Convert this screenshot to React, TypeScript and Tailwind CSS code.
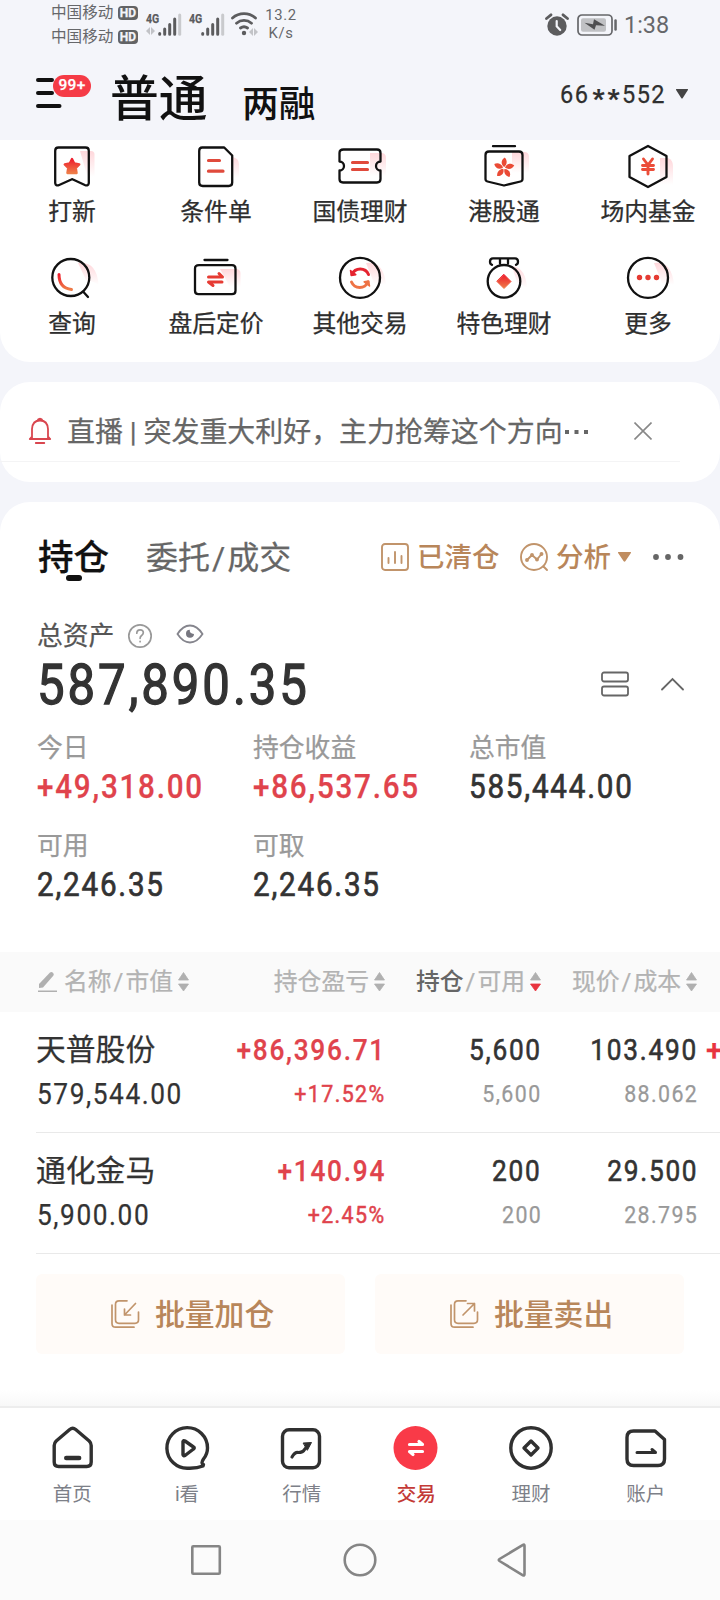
import type { ReactNode } from "react";

function Defs() {
  return (
    <svg width="0" height="0" className="absolute">
      <defs>
        <linearGradient id="hot" x1="0" y1="0" x2="0" y2="1">
          <stop offset="0" stopColor="#ee1c2c" />
          <stop offset="1" stopColor="#ee7d48" />
        </linearGradient>
        <linearGradient id="glow" x1="0" y1="0" x2="0" y2="1">
          <stop offset="0" stopColor="#ff5a6a" stopOpacity="0.24" />
          <stop offset="1" stopColor="#ff5a6a" stopOpacity="0" />
        </linearGradient>
      </defs>
    </svg>
  );
}

/* Narrow, loosely tracked figures */
function Num({ children, right }: { children: ReactNode; right?: boolean }) {
  return (
    <span className={right ? "-mr-[0.035em] inline-block origin-right scale-x-[0.89] tracking-[0.066em]" : "inline-block origin-left scale-x-[0.89] tracking-[0.06em]"}>
      {children}
    </span>
  );
}

function Tile({ label, children }: { label: string; children: ReactNode }) {
  return (
    <div className="flex h-28 w-36 flex-col items-center">
      <svg width="56" height="48" viewBox="0 0 56 48" fill="none" stroke="#111" strokeWidth="2.3" strokeLinejoin="round" strokeLinecap="round">
        {children}
      </svg>
      <span className="mt-[3px] h-9 text-[23.8px] leading-9 whitespace-nowrap text-[#2e2e2e]">{label}</span>
    </div>
  );
}

function Signal() {
  return (
    <div className="flex h-[26px] w-[43px]">
      <div className="flex w-3 flex-col">
        <span className="h-[15px] w-3 origin-left scale-x-[0.78] text-[13.5px] leading-[15px] font-bold text-[#5c5c5e]">4G</span>
      </div>
      <svg width="25" height="26" viewBox="0 0 25 26" strokeWidth="3" strokeLinecap="round" stroke="#5c5c5e">
        <path d="M1.7 22.5v.7M6.7 18v5.2M11.7 13.5v9.7M16.7 8v15.2" />
        <path d="M21.7 4v19.2" stroke="#c9cacd" />
      </svg>
    </div>
  );
}

function StatusBar() {
  return (
    <div className="flex h-[50px] items-start pl-[51px] text-[#66676a]">
      <div className="flex w-[95px] flex-col pt-[1px]">
        {[0, 1].map((i) => (
          <div key={i} className="flex h-6 items-center">
            <span className="w-[67px] text-[15.6px] leading-6 whitespace-nowrap [-webkit-text-stroke:0]">中国移动</span>
            <span className="flex h-[14px] w-[20px] items-center justify-center rounded-[4px] bg-[#626365] text-[12px] leading-none font-bold text-[#f4f5fa]">HD</span>
          </div>
        ))}
      </div>
      <div className="relative flex pt-[11px]">
        <Signal />
        <Signal />
        <svg width="9" height="8" viewBox="0 0 9 8" className="absolute top-[27px] left-0" fill="#c2c3c7">
          <path d="M0 4 4 0v8zM5 0l4 4-4 4z" />
        </svg>
        <svg width="28" height="26" viewBox="0 0 28 26" fill="none" stroke="#5c5c5e" strokeWidth="2.8" strokeLinecap="round" className="-ml-[1px]">
          <path d="M1.500 7a17.500 17.500 0 0 1 23 0M5.500 12.200a11.500 11.500 0 0 1 15 0M9.500 17a6 6 0 0 1 7 0" />
          <circle cx="13" cy="22" r="2.2" fill="#5c5c5e" stroke="none" />
          <path d="m18 21 4-4v8zM23 17l4 4-4 4z" fill="#c2c3c7" stroke="none" />
        </svg>
      </div>
      <div className="ml-[5px] flex w-[34px] flex-col items-center pt-[6px] text-[14.8px] leading-[18px] tracking-[0.7px] [-webkit-text-stroke:0]">
        <span>13.2</span>
        <span>K/s</span>
      </div>
      <div className="ml-[247px] flex h-[50px] items-center">
        <svg width="24" height="24" viewBox="0 0 24 24">
          <path d="M1.5 5.5 6 1.8M22.5 5.5 18 1.8" stroke="#5c5c5e" strokeWidth="2.8" strokeLinecap="round" />
          <circle cx="12" cy="13" r="9.7" fill="#5c5c5e" />
          <path d="M11.7 8v5.3l3.5 3.7" stroke="#f4f5fa" strokeWidth="2.2" fill="none" strokeLinecap="round" />
        </svg>
        <svg width="41" height="24" viewBox="0 0 41 24" className="ml-2">
          <rect x="1" y="2" width="34" height="20" rx="4" fill="none" stroke="#66676a" strokeWidth="1.7" />
          <rect x="4" y="5.2" width="25" height="13.500" rx="2" fill="#c0c1c4" />
          <path d="M7.500 9.700 16 11.200l1-5 11 6.500-9-.5-1.500 4.500z" fill="#4e4e50" />
          <rect x="37.300" y="6.200" width="2.500" height="11.500" rx="1.200" fill="#66676a" />
        </svg>
        <span className="ml-[6px] text-[23.4px] leading-8 [-webkit-text-stroke:0]">1:38</span>
      </div>
    </div>
  );
}

function TitleBar() {
  return (
    <div className="flex h-[90px] items-start pl-9">
      <div className="relative h-[60px] w-[74px]">
        <svg width="28" height="34" viewBox="0 0 28 34" className="mt-[26px]" stroke="#111" strokeWidth="4" strokeLinecap="round">
          <path d="M2 4h14M2 17h14M2 30h21.500" />
        </svg>
        <span className="absolute top-[25px] left-[17px] flex h-[22px] w-[38px] items-center justify-center rounded-full bg-[#f53b46] text-[15.5px] leading-none font-medium tracking-[0.3px] text-white">99+</span>
      </div>
      <span className="mt-[20px] h-[60px] w-[132px] text-[48.8px] leading-[60px] font-medium text-[#111] [-webkit-text-stroke:0]">普通</span>
      <span className="mt-[28px] h-[54px] text-[36.8px] leading-[54px] font-medium text-[#111] [-webkit-text-stroke:0]">两融</span>
      <div className="mt-[28px] ml-auto flex h-8 items-center pr-8 text-[26.5px] leading-8 text-[#2f2f2f]">
        <span className="w-[31px]"><Num>66</Num></span>
        <span className="relative top-1 w-[15px] text-center font-bold">*</span>
        <span className="relative top-1 w-[15px] text-center font-bold">*</span>
        <span className="w-[43px] pl-[1px]"><Num>552</Num></span>
        <svg width="12" height="10" viewBox="0 0 12 10" className="ml-[12px]" fill="#444">
          <path d="M.6 0h10.800a.6.6 0 0 1 .5 1L6.800 9a1 1 0 0 1-1.600 0L.1 1A.6.6 0 0 1 .6 0z" />
        </svg>
      </div>
    </div>
  );
}

const petal = "M0-1C-4-3-4.500-7.500-1-10.500 1.500-8.500 3-5 0-1z";

function Shortcuts() {
  return (
    <section className="grid h-[222px] grid-cols-5 overflow-hidden rounded-b-[30px] bg-white pt-[3px]">
      <Tile label="打新">
        <path d="M36 8h11q3.500 0 3.500 3.500V34h-7z" fill="url(#glow)" stroke="none" />
        <path d="M14.500 4.500h27q3.300 0 3.300 3.300v32.200q-.5 3.500-4 2L29 36.500q-.8-.5-1.600 0L15.200 42q-3.500 1.500-4-2V7.800q0-3.300 3.300-3.300z" />
        <path d="m28 16 2.300 4.500 5 1-3.500 3.500.8 5h-9.200l.8-5-3.500-3.500 5-1z" fill="url(#hot)" stroke="url(#hot)" />
      </Tile>
      <Tile label="条件单">
        <path d="m43 13 6 3q2 2 2 5v14h-8z" fill="url(#glow)" stroke="none" />
        <path d="M14.200 4.500h22l8 8v27q0 3.500-3.500 3.500h-26q-3.500 0-3.500-3.500V8q0-3.500 3-3.500z" />
        <path d="M20.500 17.500h11M20.500 28.200H35" stroke="#e04a3c" strokeWidth="3.200" />
      </Tile>
      <Tile label="国债理财">
        <path d="M38 10h11q5 0 5 5v18H38z" fill="url(#glow)" stroke="none" />
        <path d="M11.500 6.500h33.500q3.500 0 3.500 3.500v8.500a4.500 4.500 0 0 0 0 9V36q0 3.500-3.500 3.500H11q-3.500 0-3.500-3.500v-8.500a4.500 4.500 0 0 0 0-9V10q0-3.500 4-3.500z" />
        <path d="M20.500 19.500h15M20.500 26.500h15" stroke="#e04a3c" strokeWidth="3.200" />
      </Tile>
      <Tile label="港股通">
        <path d="M36 9h12q5 0 5 5v16H36z" fill="url(#glow)" stroke="none" />
        <path d="M17 3.200h22M13 8.500h30q3.500 0 3.500 3.500v24q0 2-2 2.500L28 42.500 11.500 38.500q-2-.5-2-2.500V12q0-3.500 3.500-3.500z" />
        <g transform="translate(28 25)" fill="#ea4a35" stroke="none">
          {[10, 82, 154, 226, 298].map((a) => (
            <path key={a} d={petal} transform={`rotate(${a})`} />
          ))}
        </g>
      </Tile>
      <Tile label="场内基金">
        <path d="M40 15h8q5 2 5 8v19H40z" fill="url(#glow)" stroke="none" />
        <path d="m28 3 18.500 10v21L28 44 9.500 34V13z" />
        <path d="m23.500 16 4.500 6 4.500-6M28 22v9M22.500 22.500h11M22.500 26.500h11" stroke="#eb4d39" strokeWidth="2.900" />
      </Tile>
      <Tile label="查询">
        <path d="M34 8q19-2 20.500 22-4-4-12-4z" fill="url(#glow)" stroke="none" />
        <circle cx="26.800" cy="22.500" r="18.500" />
        <path d="m39.500 37 4.500 5" />
        <path d="M15 19.500q0 13.500 12.500 15" stroke="url(#hot)" strokeWidth="3" />
      </Tile>
      <Tile label="盘后定价">
        <path d="M32 14h16q4.500 0 4.500 4.500V32H42z" fill="url(#glow)" stroke="none" />
        <path d="M16.500 5h23M11 10.200h33q3.500 0 3.500 3.500v22q0 3.500-3.500 3.500H10.500q-3.500 0-3.500-3.500v-22q0-3.500 4-3.500z" />
        <path d="M20.500 22h14l-3.500-3.500M34 27H20.500l4.500 3.500" stroke="#e63b33" strokeWidth="3" />
      </Tile>
      <Tile label="其他交易">
        <path d="M34 8q18-2 20 22l-12-2z" fill="url(#glow)" stroke="none" />
        <circle cx="28" cy="22.800" r="20" />
        <path d="M20 19.500a9 9 0 0 1 16.500 0" stroke="#e52430" strokeWidth="3" />
        <path d="M19.500 27a9 9 0 0 0 16.500 0" stroke="#ee7345" strokeWidth="3" />
        <path d="m18.500 15.500.8 5 4.500-.8z" fill="#e52430" stroke="#e52430" strokeWidth="1.500" />
        <path d="m37.500 31-.8-5-4.500.8z" fill="#ee7345" stroke="#ee7345" strokeWidth="1.500" />
      </Tile>
      <Tile label="特色理财">
        <path d="M36 11q14 2 15 22l-10-6z" fill="url(#glow)" stroke="none" />
        <path d="M16 9.800q-2-.5-2-3 0-3.500 3-3.500h22q3 0 3 3.500 0 2.500-2 3M24 3.500v5M32 3.500v5" />
        <circle cx="28" cy="26.300" r="16.300" />
        <path d="m28 19.500 7 7-7 7-7-7z" fill="url(#hot)" stroke="url(#hot)" strokeWidth="1" />
      </Tile>
      <Tile label="更多">
        <path d="M34 8q18-2 20 22l-12-2z" fill="url(#glow)" stroke="none" />
        <circle cx="28" cy="22.800" r="20" />
        <g fill="#e53b33" stroke="none">
          <circle cx="19.500" cy="22.500" r="2.700" />
          <circle cx="28" cy="22.500" r="2.700" />
          <circle cx="36.500" cy="22.500" r="2.700" />
        </g>
      </Tile>
    </section>
  );
}

function Notice() {
  return (
    <section className="mt-5 h-[100px] rounded-[30px] bg-white pt-5">
      <div className="flex h-[60px] w-[680px] items-center border-b border-[#f4f4f5] pl-7">
        <svg width="24" height="28" viewBox="0 0 24 28" className="mb-px" fill="none" stroke="#d9464f" strokeWidth="1.800" strokeLinecap="round" strokeLinejoin="round">
          <path d="M9.500 3.500a2.600 2.600 0 0 1 5 0M4 21V12q.5-8.500 8-8.500t8 8.500v9M1.800 22l2.200-2.500M22.200 22 20 19.500M1.800 22h20.400M7.800 26h8.500" />
        </svg>
        <span className="mt-[2px] ml-[15px] text-[27.950px] leading-9 whitespace-nowrap text-[#666]">直播 | 突发重大利好，主力抢筹这个方向</span>
        <svg width="24" height="6" viewBox="0 0 24 6" className="ml-[2px]" fill="#666">
          <path d="M0 1h4v4H0zM9.500 1h4v4h-4zM19 1h4v4h-4z" />
        </svg>
        <svg width="18" height="18" viewBox="0 0 18 18" className="mr-7 mb-px ml-auto" stroke="#888" strokeWidth="1.600">
          <path d="m.5.5 17 17M17.500.5l-17 17" />
        </svg>
      </div>
    </section>
  );
}

function Tabs() {
  return (
    <div className="flex h-[110px] items-center pl-[38px]">
      <div className="relative h-[50px] w-[108px] shrink-0 text-[35.5px] leading-[52px] font-medium text-[#111]">
        持仓
        <span className="absolute top-[43px] left-7 h-[6px] w-4 rounded-full bg-[#111]" />
      </div>
      <span className="mt-[2px] w-[234px] shrink-0 text-[32px] leading-[50px] text-[#666]">
        委托<span className="px-[2px]">/</span>成交
      </span>
      <svg width="30" height="30" viewBox="0 0 30 30" className="shrink-0" fill="none" stroke="#c1946b" strokeWidth="1.900" strokeLinecap="round">
        <rect x="2" y="2" width="26" height="26" rx="3" />
        <path d="M8.500 16v5M15 10v11M21.500 14v7" />
      </svg>
      <span className="mt-[2px] ml-[7px] w-[82px] shrink-0 text-[27.500px] leading-[50px] font-medium whitespace-nowrap text-[#b8865a] [-webkit-text-stroke:0]">已清仓</span>
      <svg width="30" height="30" viewBox="0 0 30 30" className="ml-[20px] shrink-0" fill="none" stroke="#c1946b" strokeWidth="1.900" strokeLinecap="round" strokeLinejoin="round">
        <circle cx="15" cy="15" r="13" />
        <path d="m24.500 24.500 3.500 3.500" />
        <path d="m8 18 5-5 5 4.500 4.500-5.500" />
        <circle cx="8" cy="18" r="1" /><circle cx="13" cy="13" r="1" /><circle cx="18" cy="17.500" r="1" /><circle cx="22.500" cy="12" r="1" />
      </svg>
      <span className="mt-[2px] ml-[7px] w-[55px] shrink-0 text-[27.500px] leading-[50px] font-medium whitespace-nowrap text-[#b8865a] [-webkit-text-stroke:0]">分析</span>
      <svg width="13" height="10" viewBox="0 0 13 10" className="ml-[7px] shrink-0" fill="#c08d60">
        <path d="M.6 0h11.800a.6.6 0 0 1 .5 1L7.500 9a1.200 1.200 0 0 1-2 0L.1 1A.6.6 0 0 1 .6 0z" />
      </svg>
      <svg width="32" height="6" viewBox="0 0 32 6" className="ml-[22px] shrink-0" fill="#666">
        <circle cx="3" cy="3" r="2.900" /><circle cx="15" cy="3" r="2.900" /><circle cx="27.500" cy="3" r="2.900" />
      </svg>
    </div>
  );
}

function Stat({ label, value, red }: { label: string; value: string; red?: boolean }) {
  return (
    <div className="h-[98px] w-[216px] pl-px whitespace-nowrap">
      <div className="h-[39px] text-[25.800px] leading-[40px] text-[#999]">{label}</div>
      <div className={`h-[38px] text-[33.300px] leading-[40px] ${red ? "font-medium text-[#e0434c]" : "text-[#333] [-webkit-text-stroke:0.7px]"}`}>
        <Num>{value}</Num>
      </div>
    </div>
  );
}

function Assets() {
  return (
    <div className="h-[340px] pl-9">
      <div className="flex h-12 items-center">
        <span className="w-[91px] pl-px text-[25.800px] leading-[40px] text-[#555]">总资产</span>
        <svg width="26" height="26" viewBox="0 0 26 26" fill="none" stroke="#999" strokeWidth="1.700" strokeLinecap="round">
          <circle cx="13" cy="13" r="11.200" />
          <path d="M9.800 10.200q0-3.400 3.300-3.400t3.200 3q0 1.500-1.700 2.700-1.500 1-1.500 2.800M13.100 18.400v.3" />
        </svg>
        <svg width="28" height="22" viewBox="0 0 28 22" className="mb-[4px] ml-[23px]" fill="none" stroke="#85858d" strokeWidth="1.800">
          <path d="M1.500 11Q7 2.500 14 2.500T26.500 11Q21 19.500 14 19.500T1.500 11z" />
          <path d="M13.800 6.800q-.5 4 4.200 4.200a4 4 0 1 1-4.200-4.200z" fill="#777780" stroke="none" />
        </svg>
      </div>
      <div className="flex h-[68px] items-start pr-9">
        <span className="pl-[1px] text-[55.200px] leading-[50px] text-[#333] [-webkit-text-stroke:1.300px]"><Num>587,890.35</Num></span>
        <svg width="28" height="26" viewBox="0 0 28 26" className="mt-[11px] ml-auto" fill="none" stroke="#666" strokeWidth="1.800">
          <rect x="1" y="1.500" width="26" height="9" rx="2" />
          <rect x="1" y="15.500" width="26" height="9" rx="2" />
        </svg>
        <svg width="24" height="14" viewBox="0 0 24 14" className="mt-[17px] ml-[31px]" fill="none" stroke="#666" strokeWidth="1.800" strokeLinecap="round">
          <path d="m2 12.500 10.500-10.500L23 12.500" />
        </svg>
      </div>
      <div className="flex flex-wrap">
        <Stat label="今日" value="+49,318.00" red />
        <Stat label="持仓收益" value="+86,537.65" red />
        <Stat label="总市值" value="585,444.00" />
        <Stat label="可用" value="2,246.35" />
        <Stat label="可取" value="2,246.35" />
      </div>
    </div>
  );
}

function Sort({ active }: { active?: boolean }) {
  return (
    <svg width="11" height="20" viewBox="0 0 11 20" className="ml-[5px] shrink-0" fill="#b0b0b0">
      <path d="M5.500.5 10.500 8h-10z" stroke="#b0b0b0" strokeWidth=".8" strokeLinejoin="round" />
      <path d="M.5 12h10l-5 7z" fill={active ? "#e8343f" : "#b0b0b0"} stroke={active ? "#e8343f" : "#b0b0b0"} strokeWidth=".8" strokeLinejoin="round" />
    </svg>
  );
}

const cols = "grid grid-cols-[180px_169px_156px_156px_59px]";

function HoldingsHeader() {
  return (
    <div className={`${cols} h-[60px] items-center bg-[#fafafa] pl-9 text-[23.800px] leading-[60px] whitespace-nowrap text-[#b3b3b3]`}>
      <div className="flex items-center">
        <svg width="22" height="22" viewBox="0 0 22 22" fill="#b0b0b0">
          <path d="M3 17v-4L14 1.500q1.500-1 3 .3 1.500 1.500.3 3L7 16.500z" />
          <path d="M2 19.500h19V21H2z" />
        </svg>
        <span className="ml-[6px]">名称<span className="px-[2px]">/</span>市值</span>
        <Sort />
      </div>
      <div className="flex items-center justify-end">持仓盈亏<Sort /></div>
      <div className="flex items-center justify-end">
        <span className="font-medium text-[#666] [-webkit-text-stroke:0]">持仓</span><span className="px-[2px]">/</span>可用<Sort active />
      </div>
      <div className="flex items-center justify-end">现价<span className="px-[2px]">/</span>成本<Sort /></div>
    </div>
  );
}

type Holding = { name: string; value: string; gain: string; pct: string; qty: string; price: string; cost: string; extra?: string };

const holdings: Holding[] = [
  { name: "天普股份", value: "579,544.00", gain: "+86,396.71", pct: "+17.52%", qty: "5,600", price: "103.490", cost: "88.062", extra: "+" },
  { name: "通化金马", value: "5,900.00", gain: "+140.94", pct: "+2.45%", qty: "200", price: "29.500", cost: "28.795" },
];

function HoldingRow({ h }: { h: Holding }) {
  return (
    <div className="h-[121px] overflow-hidden pl-9">
      <div className={`${cols} h-[121px] border-b border-[#e9e9e9] pt-[16px] text-[29.500px] whitespace-nowrap text-[#333]`}>
        <div>
          <div className="h-[44px] text-[29.800px] leading-[44px]">{h.name}</div>
          <div className="h-[44px] pl-[1px] leading-[44px]"><Num>{h.value}</Num></div>
        </div>
        <div className="text-right text-[#e0434c]">
          <div className="h-[44px] leading-[44px] font-medium"><Num right>{h.gain}</Num></div>
          <div className="h-[44px] text-[24px] leading-[44px] [-webkit-text-stroke:0.5px]"><Num right>{h.pct}</Num></div>
        </div>
        <div className="text-right">
          <div className="h-[44px] leading-[44px] [-webkit-text-stroke:0.6px]"><Num right>{h.qty}</Num></div>
          <div className="h-[44px] text-[24px] leading-[44px] text-[#999]"><Num right>{h.qty}</Num></div>
        </div>
        <div className="text-right">
          <div className="h-[44px] leading-[44px] [-webkit-text-stroke:0.6px]"><Num right>{h.price}</Num></div>
          <div className="h-[44px] text-[24px] leading-[44px] text-[#999]"><Num right>{h.cost}</Num></div>
        </div>
        <div className="pl-[9px] leading-[44px] font-medium text-[#e8343f]">{h.extra}</div>
      </div>
    </div>
  );
}

function BatchButton({ label, out }: { label: string; out?: boolean }) {
  return (
    <div className="flex h-20 w-[309px] items-center rounded-md bg-[#fffbf8] pl-[74px]">
      <svg width="30" height="30" viewBox="0 0 30 30" fill="none" stroke="#c1946b" strokeWidth="1.700" strokeLinecap="round" strokeLinejoin="round">
        <path d="M17 1.800H9q-3.500 0-3.500 3.500v15.500q0 3.500 3.500 3.500h16q3.500 0 3.500-3.500V13" />
        <path d="M2 6v18.500q0 3.700 3.700 3.700H24" />
        {out ? <path d="M14 16 25.500 4.500M18.500 4.500h7V12" /> : <path d="M25.500 4.500 14.500 16M14.500 10v6h6" />}
      </svg>
      <span className="mt-px ml-[15px] text-[29.800px] leading-10 font-medium text-[#b8865a] [-webkit-text-stroke:0]">{label}</span>
    </div>
  );
}

function NavItem({ label, active, children }: { label: string; active?: boolean; children: ReactNode }) {
  return (
    <div className="flex flex-1 flex-col items-center pt-4">
      <svg width="48" height="48" viewBox="0 0 48 48" fill="none" stroke="#303030" strokeWidth="3.400" strokeLinecap="round" strokeLinejoin="round">
        {children}
      </svg>
      <span className={`mt-[8px] h-[30px] text-[19.500px] leading-[30px] [-webkit-text-stroke:0] ${active ? "font-medium text-[#c43a36]" : "text-[#7d8088]"}`}>{label}</span>
    </div>
  );
}

function BottomNav() {
  return (
    <nav className="flex h-[114px] shrink-0 border-t-2 border-[#ededed] bg-white pr-[17px] pl-[15px]">
      <NavItem label="首页">
        <path d="M21.700 5.500q3-2.500 6 0L41.200 17q2 2 2 4.500V38q0 4.500-4.500 4.500h-28q-4.500 0-4.500-4.500V21.500q0-2.500 2-4.500z" />
        <path d="M18.200 34h13" strokeWidth="4.400" />
      </NavItem>
      <NavItem label="i看">
        <path d="M40 42q-6 2.500-15 2.200A20.300 20.300 0 1 1 44.500 24q0 6-4 11-3 4.500 0 5.500z" />
        <path d="M20 17.500q.5-1.500 2-.5l8.500 6q1.500 1 0 2L22 31.500q-1.500.8-2-.8z" />
      </NavItem>
      <NavItem label="行情">
        <rect x="4.500" y="5.800" width="37" height="38" rx="6.500" />
        <path d="M14 33q3-5 6-4.500 5 0 6.500-3l3.500-4" strokeWidth="3.200" />
        <path d="m25.500 19 8-.5-4 7.500z" fill="#303030" strokeWidth="1" />
      </NavItem>
      <NavItem label="交易" active>
        <circle cx="23.500" cy="24" r="22" fill="#f93a48" stroke="none" />
        <path d="M17.500 20.500h13l-3.500-3M30.500 27.500h-13l3.500 3" stroke="#fff" strokeWidth="3.200" />
      </NavItem>
      <NavItem label="理财">
        <circle cx="24" cy="24" r="20.200" />
        <path d="m24 17 7 7-7 7-7-7z" />
      </NavItem>
      <NavItem label="账户">
        <path d="M11.500 7H33l9.500 8.500V35q0 6.500-6.500 6.500H11.500q-6.500 0-6.500-6.500V13.500Q5 7 11.500 7z" />
        <path d="M15 28.500h18.500l-3.500-3" strokeWidth="3" />
      </NavItem>
    </nav>
  );
}

function SystemBar() {
  return (
    <div className="flex h-20 shrink-0 items-center bg-[#fbfbfb] pl-[190px]">
      <svg width="346" height="36" viewBox="0 0 346 36" fill="none" stroke="#858585" strokeWidth="2.600" strokeLinejoin="round">
        <rect x="2.300" y="4.300" width="27.500" height="27.500" rx="1" />
        <circle cx="170" cy="18" r="15.300" />
        <path d="M333 2.800q1.500-.8 1.500 1v28.500q0 1.800-1.500 1L309.500 19q-1.500-1 0-2z" />
      </svg>
    </div>
  );
}

export default function App() {
  return (
    <div className="flex h-[1600px] w-[720px] flex-col overflow-hidden bg-[#f4f5fa] font-[Roboto,'Noto_Sans_CJK_SC',sans-serif] [-webkit-text-stroke:0.25px]">
      <Defs />
      <StatusBar />
      <TitleBar />
      <Shortcuts />
      <Notice />
      <section className="mt-5 flex h-[904px] flex-col rounded-t-[30px] bg-white">
        <Tabs />
        <Assets />
        <HoldingsHeader />
        {holdings.map((h) => (
          <HoldingRow key={h.name} h={h} />
        ))}
        <div className="flex justify-between px-9 pt-5">
          <BatchButton label="批量加仓" />
          <BatchButton label="批量卖出" out />
        </div>
        <div className="mt-auto h-4 bg-gradient-to-b from-white to-[#f8f8f8]" />
      </section>
      <BottomNav />
      <SystemBar />
    </div>
  );
}
